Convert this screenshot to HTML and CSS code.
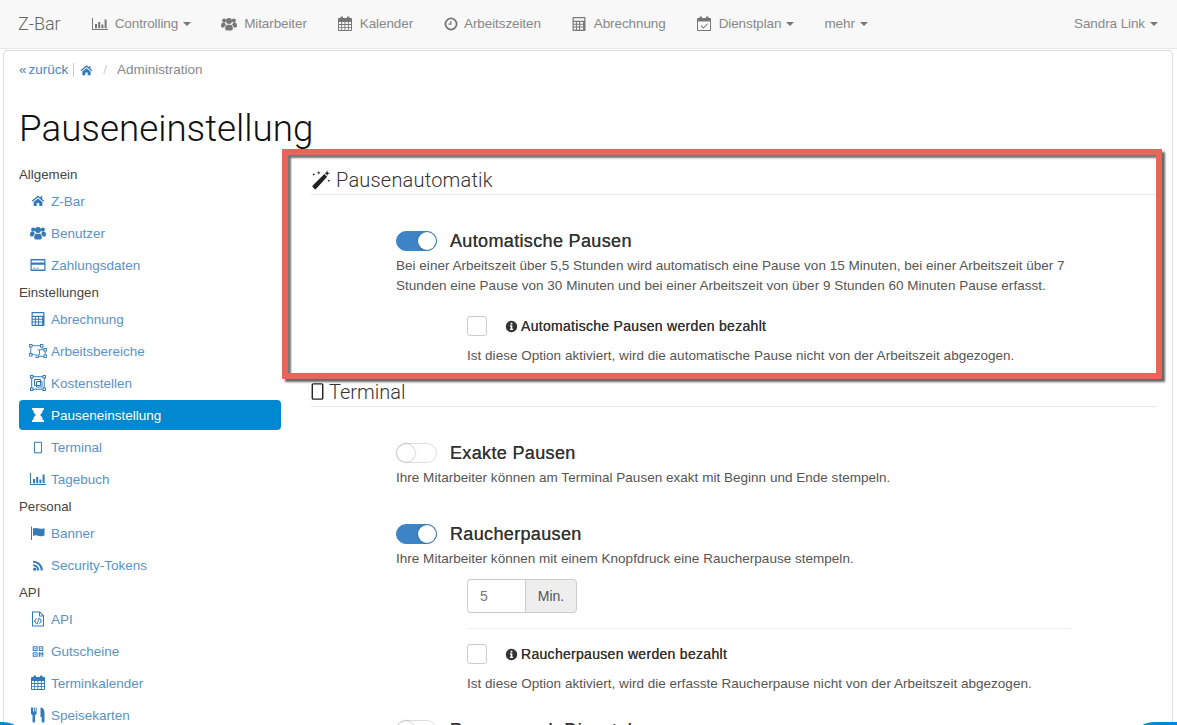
FILE: index.html
```html
<!DOCTYPE html>
<html lang="de">
<head>
<meta charset="utf-8">
<title>Pauseneinstellung</title>
<link rel="stylesheet" href="styles.css">
</head>
<body>
<svg class="sprite" width="0" height="0" aria-hidden="true">
  <symbol id="i-home" viewBox="-1.500 -1.500 19 19"><path d="M8 1.500.5 7.800l1 1.100L8 3.500l6.500 5.400 1-1.100L13 5.700V2.500h-2v1.500zM2.800 9.300 8 5l5.200 4.300V14H9.500v-3.500h-3V14H2.800z"/></symbol>
  <symbol id="i-users" viewBox="0 0 16 16"><circle cx="3.200" cy="4.500" r="2.100"/><circle cx="12.800" cy="4.500" r="2.100"/><circle cx="8" cy="5" r="3"/><path d="M0 9.500c0-2 1-3 2-3h1.800c.2.900.6 1.500 1.300 2-1 .6-1.500 1.500-1.600 3H1.200C.6 11.500 0 11 0 9.500zM16 9.500c0-2-1-3-2-3h-1.800c-.2.900-.6 1.500-1.300 2 1 .6 1.500 1.500 1.600 3h2.300c.6 0 1.200-.5 1.200-2zM4.200 12.200c0-2.200 1-3.400 2-3.400h3.600c1 0 2 1.200 2 3.400 0 1.300-.6 2.300-1.500 2.300H5.700c-.9 0-1.500-1-1.500-2.300z"/></symbol>
  <symbol id="i-card" viewBox="0 0 16 16"><path fill-rule="evenodd" d="M1.500 2h13c.6 0 1 .4 1 1v10c0 .6-.4 1-1 1h-13c-.6 0-1-.4-1-1V3c0-.6.4-1 1-1zm.2 1.400v2.100h12.600V3.400zm0 4.300v4.900h12.600V7.700zM3 10.800h2.500v.8H3zm3.500 0h2v.8h-2z"/></symbol>
  <symbol id="i-calc" viewBox="0 0 16 16"><path fill-rule="evenodd" d="M2.500 1h11c.6 0 1 .4 1 1v12c0 .6-.4 1-1 1h-11c-.6 0-1-.4-1-1V2c0-.6.4-1 1-1zm.2 1.200v2.600h10.600V2.200zm0 3.800v1.800h2.200V6zm3.200 0v1.800h2.200V6zm3.200 0v1.800h3V6zm-6.400 2.800v1.800h2.200V8.800zm3.200 0v1.800h2.200V8.800zm3.200 0v1.800h3V8.800zm-6.400 2.800v2.200h2.200v-2.200zm3.200 0v2.200h2.200v-2.200zm3.200 0v2.200h3v-2.200z"/></symbol>
  <symbol id="i-group" viewBox="0 0 18 16"><g fill="none" stroke="currentColor" stroke-width=".9"><rect x=".5" y="1.500" width="2.500" height="2.500"/><rect x="11.500" y="1.500" width="2.500" height="2.500"/><rect x=".5" y="10.500" width="2.500" height="2.500"/><rect x="15" y="5.500" width="2.500" height="2.500"/><rect x="15" y="12" width="2.500" height="2.500"/><rect x="7" y="12" width="2.500" height="2.500"/><path d="M3 2.700h8.500M1.800 4v6.500M3 11.700h3M13 4v2.500M11 6.800h4M10.500 6.800v5M9.500 13.300H15M16.200 8v4M10.500 6.800H8.500"/></g></symbol>
  <symbol id="i-box" viewBox="0 0 16 16"><g fill="none" stroke="currentColor" stroke-width="1"><rect x=".5" y=".5" width="2.500" height="2.500"/><rect x="13" y=".5" width="2.500" height="2.500"/><rect x=".5" y="13" width="2.500" height="2.500"/><rect x="13" y="13" width="2.500" height="2.500"/><path d="M3 1.700h10M3 14.200h10M1.700 3v10M14.200 3v10M4.500 4.500h6v6h-6zM6.500 6.500h5.500v5.500H6.500z"/></g></symbol>
  <symbol id="i-hour" viewBox="0 0 16 16"><path d="M2 1h12v2h-1.300c0 2.500-1.200 4-2.800 5 1.600 1 2.800 2.500 2.800 5H14v2H2v-2h1.300c0-2.500 1.200-4 2.800-5-1.600-1-2.800-2.500-2.800-5H2z"/></symbol>
  <symbol id="i-tablet" viewBox="0 0 16 16"><path fill-rule="evenodd" d="M4.500 1h7C12.400 1 13 1.600 13 2.500v11c0 .9-.6 1.500-1.500 1.500h-7C3.600 15 3 14.400 3 13.500v-11C3 1.600 3.600 1 4.500 1zm0 1.200c-.2 0-.3.100-.3.300v11c0 .2.100.3.300.3h7c.2 0 .3-.1.300-.3v-11c0-.2-.1-.3-.3-.3z"/></symbol>
  <symbol id="i-chart" viewBox="0 0 16 16"><path d="M0 2h1v11h15v1H0zM3 8h2v4.200H3zM6.200 6h2v6.200h-2zM9.400 8.500h2v3.700h-2zM12.600 3.500h2v8.700h-2z"/></symbol>
  <symbol id="i-flag" viewBox="0 0 16 16"><path d="M1 1.500h1V15H1zM3 3.500c2-1 4-.6 6 0s3.600.4 5.500-.5v7.500c-2 1-3.600 1-5.500.4s-4-1-6 0z"/></symbol>
  <symbol id="i-rss" viewBox="0 0 16 16"><circle cx="4" cy="12.500" r="2"/><path d="M2 6.500a7.500 7.500 0 0 1 7.500 7.500H7A5 5 0 0 0 2 9zM2 2a12 12 0 0 1 12 12h-2.500A9.500 9.500 0 0 0 2 4.500z"/></symbol>
  <symbol id="i-code" viewBox="0 0 16 16"><path fill-rule="evenodd" d="M2 .5h8l4 4V15a.5.500 0 0 1-.5.500h-11A.5.500 0 0 1 2 15zm1 1V14.500h10V5.500H9v-4zm7 .4V4.500h2.600zM6.200 7 4 10l2.200 3 .7-.5L5.200 10l1.700-2.500zM9.800 7l-.7.5 1.700 2.500-1.700 2.500.7.5L12 10zM8.500 6.800 6.800 13.200l.8.200 1.700-6.400z"/></symbol>
  <symbol id="i-qr" viewBox="0 0 16 16"><path fill-rule="evenodd" d="M1.500 1.500h6v6h-6zm1.200 1.200v3.600h3.600V2.700zM9 1.500h5.500v6H9zm1.200 1.200v3.600h3.100V2.700zM1.500 9h6v5.500h-6zm1.200 1.200v3.100h3.600v-3.100zM3.700 3.700h1.600v1.600H3.700zM11.200 3.700h1.100v1.600h-1.100zM3.700 11.200h1.600v1.100H3.700zM9 9h2v1.500h1.500V9h2v3.500h-2v-1h-1.500v3H9zM13 13h1.500v1.500H13z"/></symbol>
  <symbol id="i-cal" viewBox="0 0 16 16"><path fill-rule="evenodd" d="M4 .5h1.500c.3 0 .5.200.5.500v1h4V1c0-.3.200-.5.500-.5H12c.3 0 .5.200.5.500v1H14c.6 0 1 .4 1 1v11c0 .6-.4 1-1 1H2c-.6 0-1-.4-1-1V3c0-.6.400-1 1-1h1.500V1c0-.3.200-.5.500-.5zM2 6v2h2.200V6zm3.100 0v2h2.400V6zm3.300 0v2h2.500V6zm3.400 0v2H14V6zM2 8.900v2h2.200v-2zm3.100 0v2h2.400v-2zm3.300 0v2h2.500v-2zm3.400 0v2H14v-2zM2 11.800V14h2.200v-2.200zm3.100 0V14h2.400v-2.200zm3.300 0V14h2.500v-2.200zm3.400 0V14H14v-2.200z"/></symbol>
  <symbol id="i-food" viewBox="0 0 16 16"><path d="M1.500.5h1v4h.8v-4h1v4h.8v-4h1v5.500c0 1-.6 1.700-1.500 2v6.500c0 .5-.4 1-1 1h-.6c-.6 0-1-.5-1-1V8C1.100 7.700.5 7 .5 6V.5zM10 .5c2.500 0 4 2 4 5v9c0 .5-.4 1-1 1h-.8c-.6 0-1-.5-1-1V10H10z" transform="translate(.5)"/></symbol>
  <symbol id="i-clock" viewBox="0 0 16 16"><path fill-rule="evenodd" d="M8 1.500a6.500 6.500 0 1 1 0 13 6.500 6.500 0 0 1 0-13zm0 1.800a4.700 4.700 0 1 0 0 9.400 4.700 4.700 0 0 0 0-9.400zM7.300 5h1.200v3.700H5.500V7.600h1.800z"/></symbol>
  <symbol id="i-check" viewBox="0 0 16 16"><path fill-rule="evenodd" d="M4 .5h1.500c.3 0 .5.200.5.500v1h4V1c0-.3.200-.5.500-.5H12c.3 0 .5.200.5.500v1H14c.6 0 1 .4 1 1v11c0 .6-.4 1-1 1H2c-.6 0-1-.4-1-1V3c0-.6.400-1 1-1h1.500V1c0-.3.200-.5.500-.5zM2 5.500V14h12V5.500zm9.300 1.900.7.700-4.700 4.700L4.600 10l.7-.7 2 2z"/></symbol>
  <symbol id="i-wand" viewBox="0 0 18 18"><path d="M12 3.500 14.500 6 4.500 17c-.4.400-.9.400-1.300 0L1.500 15.300c-.4-.4-.4-.9 0-1.300z"/><path d="M14.500 .5l.7 1.800 1.800.7-1.800.7-.7 1.800-.7-1.800-1.800-.7 1.800-.7zM7 .8l.5 1.200 1.200.5-1.200.5L7 4.200l-.5-1.200-1.200-.5L6.500 2zM2.500 2.800l.4.800.8.400-.8.400-.4.800-.4-.8-.8-.4.800-.4zM16 8.500l.4.800.8.400-.8.400-.4.800-.4-.8-.8-.4.800-.4z"/></symbol>
  <symbol id="i-info" viewBox="0 0 16 16"><path fill-rule="evenodd" d="M8 1a7 7 0 1 1 0 14A7 7 0 0 1 8 1zM6.900 3.300v2.200h2.200V3.300zM6 6.600v1.400h1v2.800H6v1.400h4v-1.400H9V6.600z"/></symbol>
</svg>

<header class="navbar">
  <a class="brand">Z-Bar</a>
  <nav class="nav-left">
    <a class="nav-link"><svg class="ico ico-nav"><use href="#i-chart"/></svg>Controlling<span class="caret"></span></a>
    <a class="nav-link"><svg class="ico ico-nav"><use href="#i-users"/></svg>Mitarbeiter</a>
    <a class="nav-link"><svg class="ico ico-nav"><use href="#i-cal"/></svg>Kalender</a>
    <a class="nav-link"><svg class="ico ico-nav ico-nav-narrow"><use href="#i-clock"/></svg>Arbeitszeiten</a>
    <a class="nav-link"><svg class="ico ico-nav"><use href="#i-calc"/></svg>Abrechnung</a>
    <a class="nav-link"><svg class="ico ico-nav"><use href="#i-check"/></svg>Dienstplan<span class="caret"></span></a>
    <a class="nav-link">mehr<span class="caret"></span></a>
  </nav>
  <a class="nav-link nav-user">Sandra Link<span class="caret"></span></a>
</header>

<main class="panel">
  <div class="crumbs">
    <a class="crumb-link"><span class="crumb-raquo">«</span>zurück</a>
    <span class="crumb-bar"></span>
    <a class="crumb-link"><svg class="ico ico-crumb"><use href="#i-home"/></svg></a>
    <span class="crumb-sep">/</span>
    <span class="crumb-cur">Administration</span>
  </div>
  <h1 class="title">Pauseneinstellung</h1>
  <div class="columns">
    <aside class="side">
      <div class="side-head">Allgemein</div>
      <a class="side-item"><svg class="ico"><use href="#i-home"/></svg>Z-Bar</a>
      <a class="side-item"><svg class="ico"><use href="#i-users"/></svg>Benutzer</a>
      <a class="side-item"><svg class="ico"><use href="#i-card"/></svg>Zahlungsdaten</a>
      <div class="side-head">Einstellungen</div>
      <a class="side-item"><svg class="ico"><use href="#i-calc"/></svg>Abrechnung</a>
      <a class="side-item"><svg class="ico"><use href="#i-group"/></svg>Arbeitsbereiche</a>
      <a class="side-item"><svg class="ico"><use href="#i-box"/></svg>Kostenstellen</a>
      <a class="side-item side-active"><svg class="ico"><use href="#i-hour"/></svg>Pauseneinstellung</a>
      <a class="side-item"><svg class="ico ico-small"><use href="#i-tablet"/></svg>Terminal</a>
      <a class="side-item"><svg class="ico"><use href="#i-chart"/></svg>Tagebuch</a>
      <div class="side-head">Personal</div>
      <a class="side-item"><svg class="ico"><use href="#i-flag"/></svg>Banner</a>
      <a class="side-item"><svg class="ico ico-small"><use href="#i-rss"/></svg>Security-Tokens</a>
      <div class="side-head">API</div>
      <a class="side-item"><svg class="ico"><use href="#i-code"/></svg>API</a>
      <a class="side-item"><svg class="ico ico-small"><use href="#i-qr"/></svg>Gutscheine</a>
      <a class="side-item"><svg class="ico"><use href="#i-cal"/></svg>Terminkalender</a>
      <a class="side-item"><svg class="ico"><use href="#i-food"/></svg>Speisekarten</a>
    </aside>

    <section class="content">
      <h2 class="sect-head"><svg class="ico ico-head"><use href="#i-wand"/></svg>Pausenautomatik</h2>
      <div class="setting setting-end">
        <div class="toggle-row"><span class="toggle toggle-on"></span><span class="toggle-title">Automatische Pausen</span></div>
        <p class="desc">Bei einer Arbeitszeit über 5,5 Stunden wird automatisch eine Pause von 15 Minuten, bei einer Arbeitszeit über 7<br>Stunden eine Pause von 30 Minuten und bei einer Arbeitszeit von über 9 Stunden 60 Minuten Pause erfasst.</p>
        <div class="sub">
          <div class="check-row"><span class="checkbox"></span><svg class="ico ico-info"><use href="#i-info"/></svg><span class="check-label">Automatische Pausen werden bezahlt</span></div>
          <p class="desc desc-sub">Ist diese Option aktiviert, wird die automatische Pause nicht von der Arbeitszeit abgezogen.</p>
        </div>
      </div>

      <h2 class="sect-head sect-head-tight"><svg class="ico ico-head2"><use href="#i-tablet"/></svg>Terminal</h2>
      <div class="setting">
        <div class="toggle-row"><span class="toggle"></span><span class="toggle-title">Exakte Pausen</span></div>
        <p class="desc">Ihre Mitarbeiter können am Terminal Pausen exakt mit Beginn und Ende stempeln.</p>
      </div>
      <div class="setting setting-sub">
        <div class="toggle-row"><span class="toggle toggle-on"></span><span class="toggle-title">Raucherpausen</span></div>
        <p class="desc">Ihre Mitarbeiter können mit einem Knopfdruck eine Raucherpause stempeln.</p>
        <div class="sub">
          <div class="input-group"><span class="input">5</span><span class="addon">Min.</span></div>
          <hr class="rule">
          <div class="check-row"><span class="checkbox"></span><svg class="ico ico-info"><use href="#i-info"/></svg><span class="check-label">Raucherpausen werden bezahlt</span></div>
          <p class="desc desc-sub">Ist diese Option aktiviert, wird die erfasste Raucherpause nicht von der Arbeitszeit abgezogen.</p>
        </div>
      </div>
      <div class="setting">
        <div class="toggle-row"><span class="toggle"></span><span class="toggle-title">Pausen nach Dienstplan</span></div>
      </div>
    </section>
  </div>
</main>

<div class="highlight"></div>
<div class="fab fab-left"></div>
<div class="fab fab-right"></div>
</body>
</html>
```

FILE: styles.css
```css
* { box-sizing: border-box; }
html, body { margin: 0; height: 100%; overflow: hidden; }
body {
  font-family: "Liberation Sans", Arimo, sans-serif;
  font-size: 13.5px;
  line-height: 20px;
  color: #444;
  background: #fff;
}
.sprite { position: absolute; }
.ico { fill: currentColor; width: 16px; height: 16px; flex: none; }

/* navbar */
.navbar {
  display: flex;
  align-items: center;
  height: 49px;
  padding: 0 4px 0 3px;
  background: #f8f8f8;
  border-bottom: 1px solid #e7e7e7;
  color: #888;
}
.brand { font-size: 18px; padding: 0 16px 0 15px; font-family: Roboto, sans-serif; font-weight: 300; color: #666; }
.nav-left { display: flex; flex: 1; }
.nav-link { display: flex; align-items: center; padding: 0 15px; color: #888; letter-spacing: -.1px; }
.ico-nav { margin-right: 7px; color: #777; }
.ico-nav-narrow { margin-right: 5px; }
.caret {
  width: 0; height: 0; margin-left: 5px;
  border-top: 4px solid #777;
  border-left: 4px solid transparent;
  border-right: 4px solid transparent;
}

/* panel */
.panel {
  margin: 1px 4px 0 3px;
  padding: 9px 15px 0;
  min-height: 900px;
  background: #fff;
  border: 1px solid #ddd;
  border-radius: 4px;
}
.crumbs { display: flex; align-items: center; height: 20px; color: #888; }
.crumb-link { display: flex; align-items: center; color: #4a86bd; }
.crumb-raquo { margin-right: 2px; }
.crumb-bar { width: 1px; height: 14px; margin: 0 5px; background: #ccc; }
.ico-crumb { width: 15px; height: 15px; color: #337ab7; }
.crumb-sep { margin: 0 10px 0 9px; color: #ccc; }
.crumb-cur { color: #888; }
.title { margin: 29px 0 15px; font-family: Roboto, sans-serif; font-size: 36.75px; line-height: 40px; font-weight: 300; color: #111; }

.columns { display: grid; grid-template-columns: 262px 846px; column-gap: 30px; }

/* sidebar */
.side { display: flex; flex-direction: column; gap: 2px; }
.side-head { height: 20px; padding-top: 1px; line-height: 20px; color: #444; font-size: 13.3px; }
.side-item {
  display: flex; align-items: center; gap: 3px;
  height: 30px; padding-left: 9px; padding-top: 1px;
  color: #5b92c4; border-radius: 4px;
}
.side-item .ico { width: 20px; height: 16px; margin-top: -1px; color: #337ab7; }
.side-item .ico-small { height: 13px; }
.side-active { background: #0089d0; color: #fff; }
.side-item.side-active .ico { color: #fff; }

/* content */
.content { min-width: 0; }
.sect-head {
  display: flex; align-items: center;
  height: 31px; margin: 0;
  padding-top: 1px;
  font-family: Roboto, sans-serif;
  font-size: 20px; font-weight: 300; color: #333;
  letter-spacing: .2px;
  border-bottom: 1px solid #e7e7e7;
}
.sect-head-tight { letter-spacing: 0; }
.ico-head { width: 20px; height: 20px; margin-right: 5px; color: #222; }
.ico-head2 { width: 19px; height: 19px; margin-right: 2px; margin-left: -3px; color: #222; }

.setting { padding-left: 85px; margin: 36px 0; }
.setting + .setting { margin-top: 0; }
.setting-end { margin-bottom: 10px; }
.setting-sub { margin-bottom: 26px; }

.toggle-row { display: flex; align-items: center; height: 20px; gap: 13px; }
.toggle {
  position: relative; display: block; flex: none;
  width: 41px; height: 20px; border-radius: 10px;
  background: #fff; border: 1px solid #ddd;
}
.toggle::after {
  content: ""; position: absolute; left: 0; top: 0;
  width: 18px; height: 18px; border-radius: 50%;
  background: #fff; box-shadow: 0 0 2px rgba(0,0,0,.4);
}
.toggle-on { background: #3d85c6; border-color: #3d85c6; }
.toggle-on::after { left: 21px; }
.toggle-title { font-size: 18px; letter-spacing: .35px; color: #333; text-shadow: 0 0 .4px #333; }

.desc { margin: 5px 0 0; color: #555; letter-spacing: .02px; }
.sub { margin: 20px 0 0 71px; }
.setting-sub .sub { margin-top: 10px; }
.check-row { display: flex; align-items: center; height: 20px; }
.checkbox { display: block; flex: none; width: 20px; height: 20px; border: 1px solid #ccc; border-radius: 3px; margin-right: 19px; }
.ico-info { width: 13px; height: 13px; margin-right: 3px; margin-left: -1px; color: #333; }
.check-label { font-size: 14px; letter-spacing: .3px; color: #333; text-shadow: 0 0 .4px #333; }
.desc-sub { margin-top: 10px; }

.input-group { display: flex; width: 110px; height: 34px; }
.input {
  width: 58px; padding: 6px 12px; color: #777; font-size: 14px;
  border: 1px solid #ccc; border-right: 0;
  border-radius: 4px 0 0 4px;
}
.addon {
  flex: 1; padding: 6px 0; text-align: center; color: #555; font-size: 14px;
  background: #eee; border: 1px solid #ccc;
  border-radius: 0 4px 4px 0;
}
.rule { margin: 15px 0; width: 604px; height: 1px; border: 0; background: #eee; }

/* overlays */
.highlight {
  position: absolute; left: 282px; top: 149px; width: 880px; height: 230px;
  border: 6px solid #e9655a;
  box-shadow: 3px 3px 2px #666, inset 3px 3px 2px #777;
}
.fab { position: fixed; top: 722px; height: 40px; background: #0089d0; }
.fab-left { left: -30px; width: 57px; border-radius: 0 24px 0 0; }
.fab-right { left: 1130px; width: 60px; border-radius: 24px 0 0 0; }
```
